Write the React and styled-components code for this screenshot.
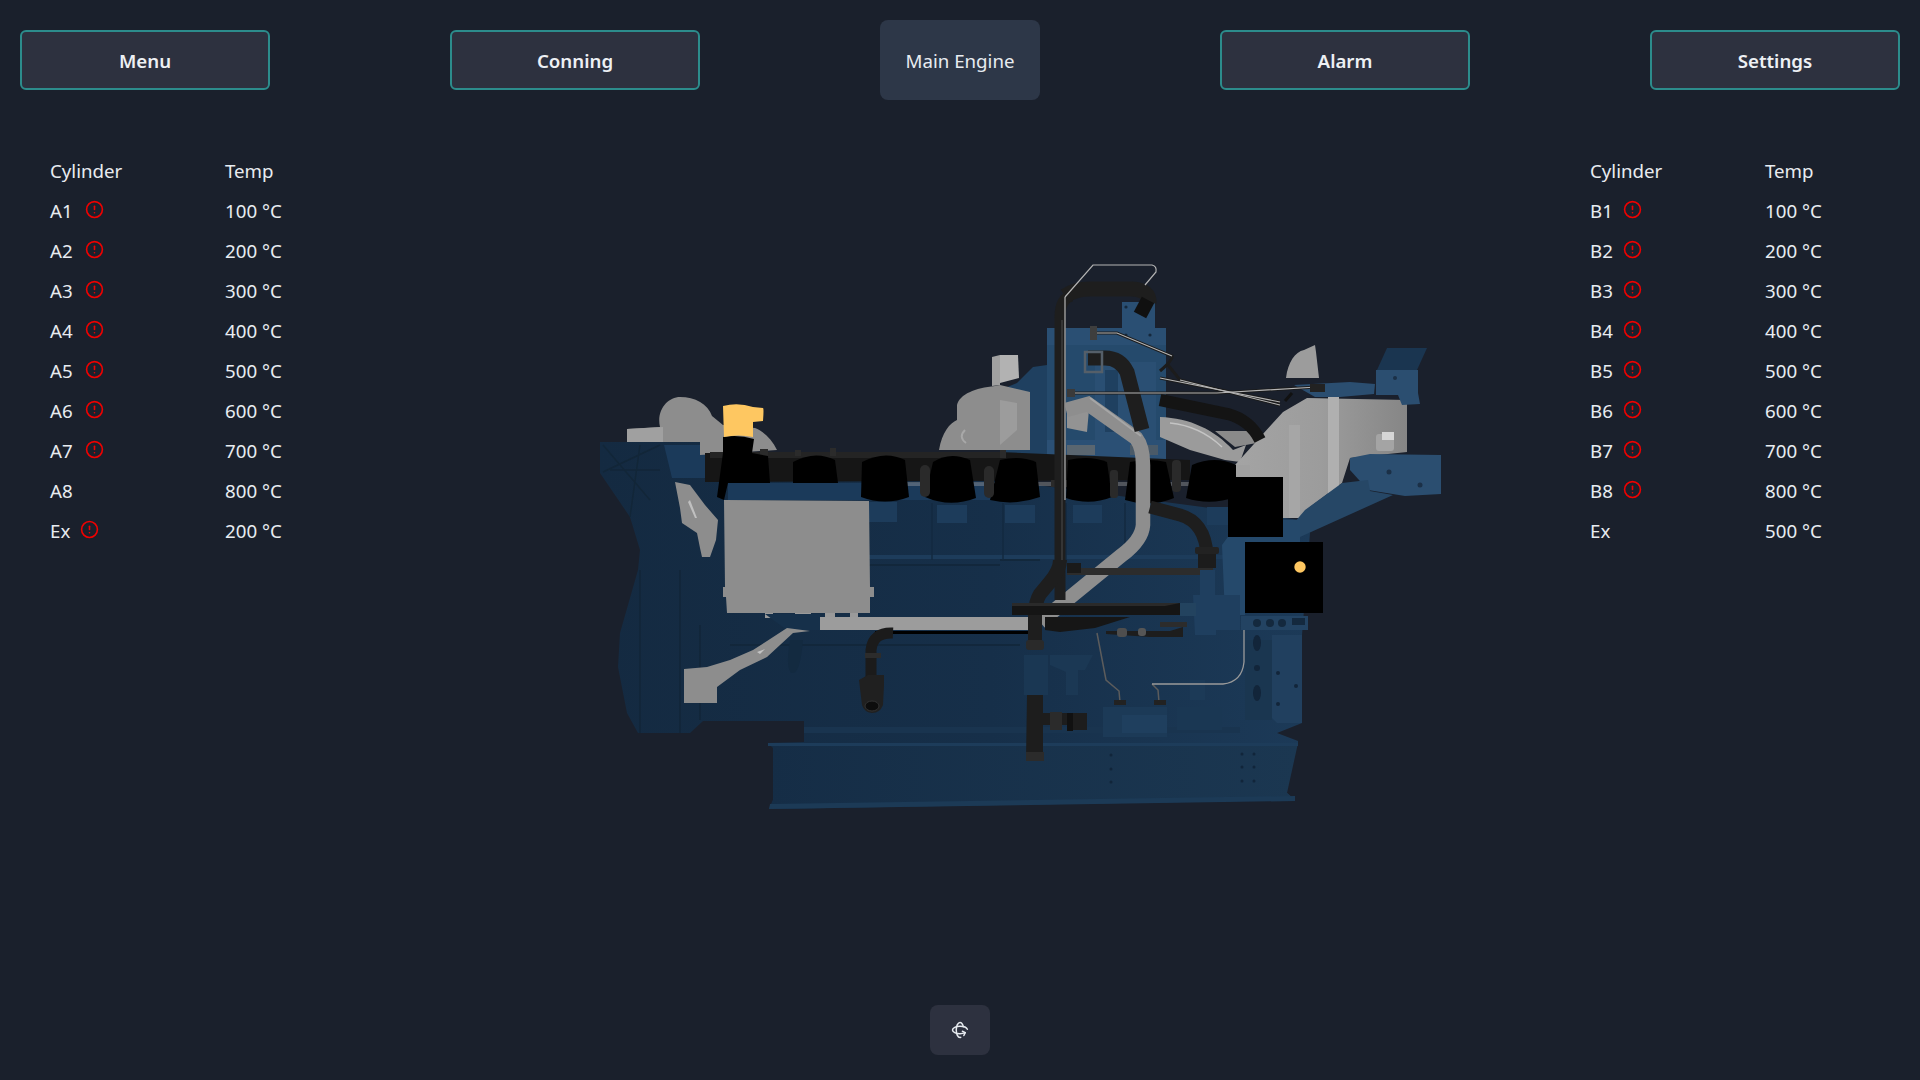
import React from 'react';
import styled, { createGlobalStyle } from 'styled-components';
import { CircleAlert, Rotate3d } from 'lucide-react';

const GlobalStyle = createGlobalStyle`
  html, body { margin: 0; padding: 0; background: #1a202c; }
  body { font-family: "Noto Sans", "Open Sans", "Liberation Sans", sans-serif; color: #e8ecf1; }
`;

const Page = styled.div`
  width: 100%;
  height: 100vh;
  display: flex;
  flex-direction: column;
  overflow: hidden;
  background: #1a202c;
`;

const TopBar = styled.header`
  height: 120px;
  padding: 0 20px;
  box-sizing: border-box;
  display: flex;
  justify-content: space-between;
  align-items: center;
  flex: none;
`;

const NavButton = styled.button`
  width: 250px;
  height: 60px;
  box-sizing: border-box;
  border: 2px solid #2c8c8c;
  border-radius: 6px;
  background: #2d313f;
  color: #edf0f4;
  font: 600 18.7px "Noto Sans", sans-serif;
`;

const ActiveButton = styled.button`
  width: 160px;
  height: 80px;
  border: 0;
  border-radius: 8px;
  background: #2d3748;
  color: #e8ecf1;
  font: 400 18.7px "Noto Sans", sans-serif;
`;

const Main = styled.main`
  flex: 1;
  display: grid;
  grid-template-columns: 530px 880px 1fr;
  padding-left: 50px;
  padding-top: 30px;
  min-height: 0;
`;

const TempTable = styled.div`
  display: grid;
  grid-template-columns: 175px 100px;
  grid-auto-rows: 40px;
  align-content: start;
  font-size: 18.7px;
`;

const Cell = styled.div`
  display: flex;
  align-items: center;
  gap: ${({ $gap }) => $gap}px;
  svg { color: #f00000; flex: none; margin-top: -1px; }
`;

const Stage = styled.div`
  margin-top: 100px;
  svg { display: block; }
`;

const RightSide = styled.div`
  padding-left: 130px;
`;

const Footer = styled.footer`
  height: 75px;
  flex: none;
  display: flex;
  justify-content: center;
`;

const ResetButton = styled.button`
  width: 60px;
  height: 50px;
  border: 0;
  border-radius: 8px;
  background: #2d313f;
  color: #e8ecf1;
  display: flex;
  align-items: center;
  justify-content: center;
  padding: 0;
`;

const leftRows = [
  ['A1', '100', 1], ['A2', '200', 1], ['A3', '300', 1], ['A4', '400', 1], ['A5', '500', 1],
  ['A6', '600', 1], ['A7', '700', 1], ['A8', '800', 0], ['Ex', '200', 1],
];
const rightRows = [
  ['B1', '100', 1], ['B2', '200', 1], ['B3', '300', 1], ['B4', '400', 1], ['B5', '500', 1],
  ['B6', '600', 1], ['B7', '700', 1], ['B8', '800', 1], ['Ex', '500', 0],
];

const Table = ({ rows, gap }) => (
  <TempTable>
    <Cell>Cylinder</Cell>
    <Cell>Temp</Cell>
    {rows.map(([name, temp, alert]) => (
      <React.Fragment key={name}>
        <Cell $gap={name === 'Ex' ? 10 : gap}>
          {name}
          {alert ? <CircleAlert size={19} strokeWidth={2} /> : null}
        </Cell>
        <Cell>{temp} °C</Cell>
      </React.Fragment>
    ))}
  </TempTable>
);

const GREY = '#8d8d8d';

// side view of the engine, drawn in page coordinates
const Engine = () => (
  <svg width="880" height="570" viewBox="580 250 880 570" xmlns="http://www.w3.org/2000/svg">
    <defs>
      <linearGradient id="body" x1="0" x2="1" y1="0" y2="0">
        <stop offset="0" stopColor="#142a41" />
        <stop offset="0.55" stopColor="#162f49" />
        <stop offset="1" stopColor="#1c3a58" />
      </linearGradient>
      <linearGradient id="base" x1="0" x2="1" y1="0" y2="0">
        <stop offset="0" stopColor="#152d46" />
        <stop offset="1" stopColor="#1b3751" />
      </linearGradient>
      <linearGradient id="housing" x1="0" x2="1" y1="0" y2="0">
        <stop offset="0" stopColor="#a4a4a4" />
        <stop offset="0.5" stopColor="#9c9c9c" />
        <stop offset="1" stopColor="#868686" />
      </linearGradient>
    </defs>

    {/* main block, flywheel and base */}
    <path fill="url(#body)" d="M600 442 L700 442 L705 480 L1000 480 L1300 520 L1310 533 L1302 635 L1302 723 L1277 733 L1298 741 L1298 745 L1285 745 L1287 793 L1295 800 L1000 805 L769 809 L773 800 L773 748 L768 743 L804 742 L804 721 L703 721 L690 733 L638 733 L627 713 L618 667 L620 633 L638 570 L640 550 L630 517 L600 473 Z" />
    <path fill="url(#base)" d="M773 745 L1298 743 L1287 793 L1295 800 L769 809 L773 800 Z" />
    <path fill="#1c3a56" d="M770 804 L1295 796 L1295 801 L769 809 Z" />
    <path fill="#1d3c5a" d="M768 743 H1298 V746 H768 Z" />
    <path fill="#19344f" d="M804 727 H1240 V733 H804 Z" />
    <g fill="none" stroke="#122638" strokeWidth="1.4">
      <path d="M603 445 L650 500 M603 472 L660 445 M640 445 L630 517 M660 470 L610 470" />
      <path d="M640 570 V733 M680 570 V733 M700 625 V720" />
      <path d="M869 565 H1000 M1000 560 H1040 M730 645 H1020" />
    </g>
    <path fill="#132a40" d="M790 640 Q785 670 792 673 Q800 675 803 640 Z" />
    <path fill="#1b3a5a" d="M664 445 H705 V478 H672 Z" />
    <g fill="#11253a">
      <circle cx="1111" cy="755" r="1.5" /><circle cx="1111" cy="769" r="1.5" /><circle cx="1111" cy="782" r="1.5" />
      <circle cx="1242" cy="754" r="1.5" /><circle cx="1254" cy="754" r="1.5" /><circle cx="1242" cy="767" r="1.5" />
      <circle cx="1254" cy="767" r="1.5" /><circle cx="1242" cy="781" r="1.5" /><circle cx="1254" cy="781" r="1.5" />
    </g>

    {/* upper block behind the pipes */}
    <path fill="#1f4060" d="M1000 390 L1017 383 L1033 367 L1047 365 L1047 328 L1122 328 L1122 302 L1155 302 L1155 330 L1166 332 L1166 455 L1160 480 L1000 480 Z" />
    <path fill="#2a4f73" d="M1047 328 H1166 V345 H1047 Z" />
    <path fill="#2a4f73" d="M1122 302 H1155 V332 H1122 Z" />
    <path fill="#254a6c" d="M1047 345 H1166 V440 H1047 Z" />
    <path fill="#2a4f73" d="M1095 362 H1156 V440 H1095 Z" />
    <path fill="#1f4060" d="M1105 370 H1118 V432 H1105 Z" />
    <path fill="#2b5075" d="M1047 440 H1166 V460 H1047 Z" />
    <rect x="1067" y="445" width="28" height="10" fill="#5a6670" />
    <rect x="1130" y="445" width="28" height="10" fill="#4a5a68" />
    <circle cx="1126" cy="307" r="1.6" fill="#15283c" />
    <circle cx="1150" cy="335" r="1.6" fill="#15283c" />
    <circle cx="1126" cy="335" r="1.6" fill="#15283c" />

    {/* lighter panels below the cylinders */}
    <g fill="#1d3c5b">
      <rect x="869" y="502" width="28" height="20" />
      <rect x="937" y="505" width="30" height="18" />
      <rect x="1005" y="505" width="30" height="18" />
      <rect x="1073" y="505" width="29" height="18" />
      <rect x="1207" y="507" width="21" height="18" />
      <rect x="869" y="555" width="370" height="4" />
    </g>
    <g stroke="#132a40" strokeWidth="1.5">
      <path d="M1003 503 V560 M1066 503 V560 M932 503 V560 M1125 503 V560" />
    </g>

    {/* grey parts at the back */}
    <path fill={GREY} d="M627 429 L660 427 C656 410 668 397 680 397 C695 397 708 404 712 416 L723 425 L755 428 C765 432 772 440 777 450 L700 455 L700 442 L627 442 Z" />
    <path fill="#a0a0a0" d="M627 429 L663 427 L663 442 L627 442 Z" />
    <path fill="#b2b2b2" d="M1000 355 L1018 355 L1019 378 L1000 383 Z" />
    <path fill={GREY} d="M939 450 C942 432 950 423 957 420 L957 405 C960 394 975 388 995 386 L1000 385 L1030 392 L1030 450 L1017 450 Z" />
    <path fill="#a0a0a0" d="M992 386 L992 357 L1000 355 L1000 385 Z" />
    <path fill="none" stroke="#a8a8a8" strokeWidth="2" d="M965 430 Q958 437 966 443" />
    <path fill="#9c9c9c" d="M1000 400 L1017 403 L1017 430 L1000 445 Z" />
    <path fill="#9b9b9b" d="M1160 417 C1190 418 1215 430 1233 450 L1246 445 L1240 462 L1225 460 L1190 450 L1160 437 Z" />
    <path fill="none" stroke="#c4c4c4" strokeWidth="1.5" d="M1170 423 Q1200 426 1222 447" />
    <path fill="#8a8a8a" d="M1215 431 L1260 431 L1262 442 L1235 447 Z" />

    {/* right hand housing */}
    <path fill="#9c9c9c" d="M1286 378 C1288 362 1295 352 1304 350 L1315 345 L1316 352 L1319 378 Z" />
    <path fill="url(#housing)" d="M1283 412 L1307 398 L1407 400 L1407 452 L1350 458 L1342 483 L1310 507 L1300 518 L1282 518 L1282 480 L1243 480 L1235 465 L1272 424 Z" />
    <path fill="#b0b0b0" d="M1328 397 H1339 V498 L1328 506 Z" />
    <path fill="#acacac" d="M1289 425 H1300 V518 H1289 Z" opacity="0.6" />
    <rect x="1376" y="434" width="18" height="17" rx="3" fill="#a4a4a4" />
    <rect x="1382" y="432" width="12" height="8" fill="#d6d6d6" />
    <rect x="1232" y="465" width="18" height="12" fill="#a0a0a0" />

    {/* blue brackets */}
    <path fill="#1a3550" d="M1387 348 H1427 L1417 370 H1377 Z" />
    <path fill="#2b4e70" d="M1376 370 H1418 V393 L1420 404 L1402 405 L1398 395 H1376 Z" />
    <path fill="#2b4e70" d="M1294 385 L1350 382 L1375 384 L1374 394 L1340 397 L1315 397 Z" />
    <path fill="#2b4e70" d="M1350 458 L1370 454 L1441 455 L1441 494 L1405 496 L1368 490 L1350 470 Z" />
    <path fill="#264766" d="M1342 483 L1368 480 L1370 491 L1393 495 L1300 537 L1282 537 L1305 510 Z" />
    <circle cx="1389" cy="472" r="2.5" fill="#1b3047" />
    <circle cx="1420" cy="485" r="2.5" fill="#1b3047" />
    <circle cx="1395" cy="378" r="2" fill="#1b3047" />
    <path fill="#25496b" d="M1240 520 H1300 V545 H1245 V615 H1225 L1222 545 Z" />

    {/* manifold rail */}
    <path fill="#161616" d="M705 453 L1000 452 L1190 460 L1190 480 L705 482 Z" />
    <path fill="#242424" d="M710 452 H1000 V458 H710 Z" />
    <path fill="#2b2b2b" d="M760 449 h8 v8 h-8 z M795 450 h6 v6 h-6 z M830 448 h6 v8 h-6 z M1000 450 h6 v8 h-6 z" />
    <path fill="#1b3a5a" d="M728 483 H1000 L1000 500 H728 Z" />
    <path fill="#a4a4a4" d="M895 482 H1190 V486 H895 Z" opacity="0.4" />

    {/* cylinder covers */}
    <g fill="#000">
      <path d="M723 437 Q738 434 754 439 L752 453 L768 456 L770 483 L728 483 L724 500 L717 497 L723 453 Z" />
      <path d="M793 462 Q815 450 835 460 L838 483 L793 483 Z" />
      <path d="M862 462 Q885 450 905 460 L909 497 Q885 506 861 497 Z" />
      <path d="M933 462 Q950 451 970 460 L976 498 Q950 508 925 497 Z" />
      <path d="M1000 460 Q1020 455 1036 462 L1040 497 Q1015 506 990 500 Z" />
      <path d="M1068 460 Q1090 455 1107 462 L1112 497 Q1090 506 1066 498 Z" />
      <path d="M1130 462 Q1150 458 1166 462 L1174 498 Q1150 508 1125 500 Z" />
      <path d="M1192 465 Q1215 455 1236 465 L1236 497 Q1210 506 1186 498 Z" />
      <rect x="1228" y="477" width="55" height="60" />
      <rect x="1245" y="542" width="78" height="71" />
    </g>
    <path fill="#fec761" d="M723 406 Q738 402 753 407 L763 408 Q764 408 763 421 L753 422 L753 437 Q738 434 724 437 Z" />
    <circle cx="1300" cy="567" r="5.7" fill="#fec761" />

    {/* injector stubs */}
    <g fill="#2a2a2a">
      <rect x="920" y="465" width="10" height="32" rx="5" />
      <rect x="984" y="466" width="10" height="32" rx="5" />
      <rect x="1051" y="480" width="16" height="7" />
      <rect x="1110" y="470" width="8" height="28" rx="3" />
      <rect x="1172" y="460" width="9" height="32" rx="4" />
    </g>

    {/* grey charge box and its pipework */}
    <path fill={GREY} d="M724 500 L869 501 L870 587 L874 587 L874 597 L870 597 L870 613 L727 613 L726 597 L723 597 L723 587 L725 587 Z" />
    <path fill="#9a9a9a" d="M765 613 h8 v5 h-8 z M795 613 h16 v5 h-16 z M825 613 h10 v5 h-10 z M850 613 h8 v5 h-8 z" />
    <path fill="#16304a" d="M765 614 H820 V630 H787 Z" />
    <path fill={GREY} d="M675 482 L690 485 L705 505 L718 520 L716 540 L710 557 L702 557 L700 548 L697 533 L682 523 L680 508 Z" />
    <path fill="#c0c0c0" d="M690 500 L697 518 L695 518 L688 502 Z" />
    <path fill={GREY} d="M787 628 L753 650 L730 660 L707 667 L684 669 L684 703 L717 703 L717 687 L740 670 L767 657 L793 633 L810 631 Z" />
    <path fill="#c4c4c4" d="M757 652 L765 649 L760 654 Z" />
    <path fill="#9c9c9c" d="M820 617 H1028 V630 H820 Z" />
    <path fill="#000" d="M875 631 H1030 V634 H875 Z" />

    {/* grey coolant pipe */}
    <path fill="#939393" d="M1067 407 L1090 398 L1087 432 L1067 428 Z" />
    <path fill="none" stroke="#8e8e8e" strokeWidth="14.5" d="M1066 410 L1088 404 L1136 438 Q1143 447 1143 465 L1143 525 Q1142 540 1122 555 L1040 622" />
    <path fill="none" stroke="#a6a6a6" strokeWidth="2" d="M1090 398 L1141 436" />

    {/* black pipes */}
    <g fill="none" stroke="#1e1e1e" strokeLinecap="butt">
      <path strokeWidth="11" d="M1060 600 V318 Q1060 298 1072 296" />
      <path strokeWidth="15" d="M1065 296 Q1075 289 1090 289 H1132 Q1150 290 1149 303" />
      <path strokeWidth="14" stroke="#101010" d="M1148 300 L1140 315" />
      <path strokeWidth="15" d="M1088 358 H1105 Q1120 358 1127 372 L1142 430" />
      <path strokeWidth="12" stroke="#141414" d="M1160 400 L1228 414 Q1250 420 1260 440" />
      <path strokeWidth="13" d="M1150 507 L1180 515 Q1205 522 1207 555" />
      <path strokeWidth="14" d="M1060 560 Q1060 570 1050 582 L1040 594 Q1035 602 1035 615 V640" />
    </g>
    <path fill="none" stroke="#555f69" strokeWidth="2.5" d="M1085 352 H1102 V372 H1085 Z" />
    <path fill="none" stroke="#353535" strokeWidth="2" d="M1062 320 V560" />
    <rect x="1195" y="547" width="24" height="7" rx="2" fill="#222" />
    <rect x="1198" y="554" width="18" height="14" fill="#1c1c1c" />
    <rect x="1067" y="568" width="146" height="7" fill="#2c2c2c" />
    <rect x="1067" y="563" width="14" height="10" fill="#1a1a1a" />
    <rect x="1012" y="603" width="172" height="12" fill="#151515" />
    <path fill="#2a2a2a" d="M1012 603 H1180 L1165 606 H1012 Z" />
    <path fill="#161616" d="M1045 617 H1130 L1095 628 L1060 632 L1045 630 Z" />
    <rect x="1026" y="640" width="18" height="10" rx="3" fill="#2a2a2a" />

    {/* lower fuel line parts */}
    <path fill="#1a3753" d="M1024 655 H1048 V695 H1024 Z" />
    <path fill="#1b3854" d="M1050 655 H1093 L1085 670 H1078 L1078 695 H1066 L1066 672 L1050 665 Z" />
    <path fill="#1f3f5f" d="M1193 595 H1240 V630 H1216 V635 H1195 Z" />
    <path fill="#1f3f5f" d="M1200 570 H1215 V598 H1200 Z" />
    <path fill="#23435f" d="M1180 603 H1196 V616 H1180 Z" />
    <path fill="#1c3a57" d="M1103 707 H1167 V737 H1103 Z" />
    <path fill="#1f3f5e" d="M1122 715 H1167 V733 H1122 Z" />
    <path fill="#1a3753" d="M1177 707 H1222 V730 H1177 Z" />
    <path fill="#1c3a57" d="M1190 680 H1205 V700 H1190 Z" />
    <path fill="#1d1d1d" d="M1106 631 H1170 L1183 627 V637 H1150 L1150 637 L1106 634 Z" />
    <rect x="1117" y="628" width="10" height="9" rx="3" fill="#4e4e4e" />
    <rect x="1138" y="628" width="8" height="8" rx="3" fill="#565656" />
    <path fill="#2c2c2c" d="M1160 622 H1187 V627 H1160 Z" />
    <path fill="none" stroke="#5c5c5c" strokeWidth="1.5" d="M1097 633 L1106 680 L1119 691 L1120 702" />
    <path fill="none" stroke="#5c5c5c" strokeWidth="1.5" d="M1152 684 L1158 690 L1159 702" />
    <path fill="none" stroke="#9a9a9a" strokeWidth="1.3" d="M1152 684 H1223 Q1242 682 1244 662 V630" />
    <rect x="1114" y="700" width="12" height="5" fill="#222" />
    <rect x="1154" y="700" width="12" height="5" fill="#222" />

    {/* T piece */}
    <path fill="#1d1d1d" d="M1027 695 H1043 V713 H1087 V730 H1070 V725 H1043 V760 H1026 Z" />
    <rect x="1026" y="752" width="18" height="9" fill="#2b2b2b" />
    <rect x="1050" y="712" width="12" height="18" fill="#2b2b2b" />
    <rect x="1067" y="713" width="6" height="18" fill="#111" />

    {/* panel below the black box */}
    <path fill="#234362" d="M1241 616 H1308 V630 H1241 Z" />
    <g fill="#14293e">
      <circle cx="1257" cy="623" r="4" />
      <circle cx="1270" cy="623" r="4" />
      <circle cx="1282" cy="623" r="4" />
      <rect x="1292" y="618" width="13" height="7" />
    </g>
    <path fill="#21405f" d="M1272 635 H1302 V723 H1277 L1272 718 Z" />
    <path fill="#1a3650" d="M1245 640 H1272 V720 H1245 Z" />
    <ellipse cx="1257" cy="643" rx="4" ry="8" fill="#12253a" />
    <ellipse cx="1257" cy="693" rx="4" ry="8" fill="#12253a" />
    <circle cx="1257" cy="668" r="3" fill="#12253a" />
    <circle cx="1278" cy="673" r="2" fill="#12253a" />
    <circle cx="1296" cy="686" r="2" fill="#12253a" />
    <circle cx="1278" cy="704" r="2" fill="#12253a" />

    {/* lower left connector */}
    <path fill="none" stroke="#1b1b1b" strokeWidth="11" d="M893 633 Q873 632 871 650 V680" />
    <path fill="#2c2c2c" d="M865 653 H881 V658 H865 Z" />
    <path fill="#202020" d="M868 675 L884 675 L884 685 L883 705 Q880 713 872 713 Q864 712 862 705 L859 680 Z" />
    <ellipse cx="872" cy="706" rx="7" ry="5" fill="#0d0d0d" stroke="#333" />

    {/* silver tube frame and thin lines */}
    <g fill="none" stroke="#1c1c1c" strokeWidth="3">
      <path d="M1095 333 H1117 L1172 356 Q1173 360 1160 371" />
      <path d="M1168 365 L1180 380 L1280 405" />
      <path d="M1160 378 L1280 402" />
      <path d="M1068 393 L1217 393 L1317 387" />
    </g>
    <g fill="none" stroke="#b4b4b4" strokeWidth="1.2">
      <path d="M1065 297 L1093 265 H1152 Q1157 266 1156 272 L1145 285" />
      <path d="M1065 297 V500" />
      <path d="M1095 333 H1117 L1172 356" />
      <path d="M1180 380 L1280 405" />
      <path d="M1160 378 L1280 402" />
      <path d="M1068 393 L1217 393 L1317 387" />
    </g>
    <rect x="1090" y="326" width="7" height="14" fill="#3e3e3e" />
    <rect x="1067" y="389" width="8" height="8" fill="#3a3a3a" />
    <rect x="1310" y="384" width="15" height="8" fill="#222" />
    <path stroke="#111" strokeWidth="3" d="M1285 401 L1292 393" />
  </svg>
);

export default function App() {
  return (
    <Page>
      <GlobalStyle />
      <TopBar>
        <NavButton>Menu</NavButton>
        <NavButton>Conning</NavButton>
        <ActiveButton>Main Engine</ActiveButton>
        <NavButton>Alarm</NavButton>
        <NavButton>Settings</NavButton>
      </TopBar>
      <Main>
        <Table rows={leftRows} gap={12} />
        <Stage>
          <Engine />
        </Stage>
        <RightSide>
          <Table rows={rightRows} gap={10} />
        </RightSide>
      </Main>
      <Footer>
        <ResetButton>
          <Rotate3d size={18} />
        </ResetButton>
      </Footer>
    </Page>
  );
}
